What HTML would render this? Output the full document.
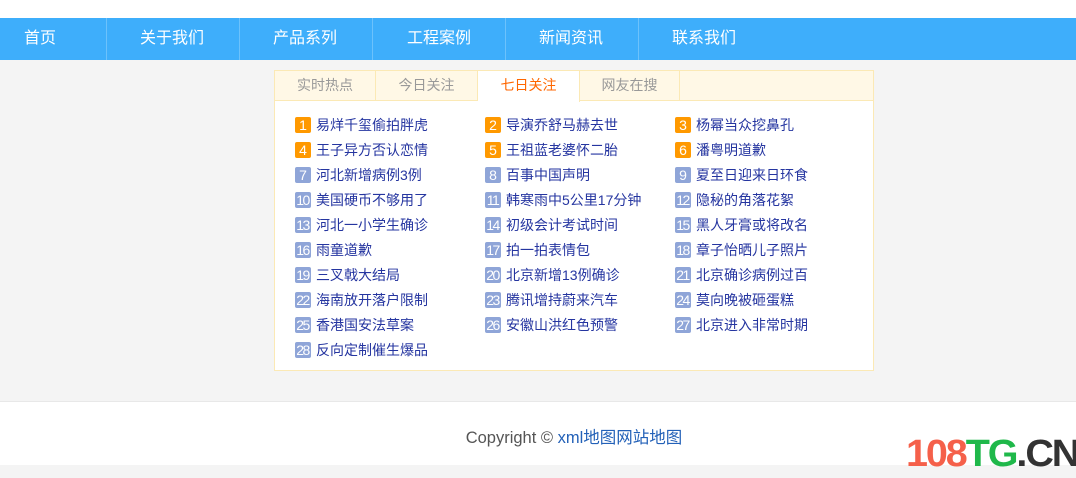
<!DOCTYPE html>
<html><head><meta charset="utf-8"><style>
*{margin:0;padding:0;box-sizing:border-box}
body{width:1076px;height:478px;background:#f4f4f4;font-family:"Liberation Sans","Noto Sans CJK SC",sans-serif;position:relative;overflow:hidden}
.top{position:absolute;left:0;top:0;width:1076px;height:18px;background:#fff}
.nav{position:absolute;left:0;top:18px;width:1076px;height:42px;background:#3eaefb}
.nav span{position:absolute;top:0;height:42px;line-height:42px;color:#fff;font-size:16px}
.sep{position:absolute;top:0;width:1px;height:42px;background:#6cc2fc}
.box{position:absolute;left:274px;top:70px;width:600px;height:301px;background:#fff;border:1px solid #fbe9b5}
.tabs{position:absolute;left:0;top:0;width:598px;height:30px;background:#fff8e6;border-bottom:1px solid #fbe9b5}
.tab{position:absolute;top:0;height:30px;line-height:29px;text-align:center;font-size:14px;color:#999;border-right:1px solid #fbe9b5}
.tab.on{background:#fff;color:#f60;height:31px}
.it{position:absolute;font-size:14px;color:#2535a0;height:16px;line-height:16px;white-space:nowrap}
.it b{display:inline-block;width:16px;height:16px;border-radius:2px;background:#8fa5d8;color:#fff;font-weight:normal;text-align:center;font-size:14px;margin-right:5px;vertical-align:top;line-height:16px}
.it b.o{background:#f90}
.it b.s{font-size:14px;letter-spacing:-1.5px;text-indent:-1px}
.foot{position:absolute;left:0;top:401px;width:1076px;height:64px;background:#fff;border-top:1px solid #e8e8e8}
.copy{position:absolute;left:0;width:1148px;top:22px;text-align:center;font-size:16.5px;color:#555}
.copy a{color:#2361b8;text-decoration:none}
.logo{position:absolute;left:906px;top:434px;font-size:38px;font-weight:bold;letter-spacing:-2px;font-family:"Liberation Sans",sans-serif;line-height:40px;transform:scaleX(1.04);transform-origin:left}
</style></head><body>
<div class="top"></div>
<div class="nav">
<span style="left:24px">首页</span>
<div class="sep" style="left:106px"></div>
<span style="left:140px">关于我们</span>
<div class="sep" style="left:239px"></div>
<span style="left:273px">产品系列</span>
<div class="sep" style="left:372px"></div>
<span style="left:407px">工程案例</span>
<div class="sep" style="left:505px"></div>
<span style="left:539px">新闻资讯</span>
<div class="sep" style="left:638px"></div>
<span style="left:672px">联系我们</span>
</div>
<div class="box">
<div class="tabs">
<div class="tab" style="left:0;width:101px">实时热点</div>
<div class="tab" style="left:101px;width:102px">今日关注</div>
<div class="tab on" style="left:203px;width:102px">七日关注</div>
<div class="tab" style="left:305px;width:100px">网友在搜</div>
</div>
<div class="it" style="left:20px;top:46px"><b class="o">1</b>易烊千玺偷拍胖虎</div>
<div class="it" style="left:210px;top:46px"><b class="o">2</b>导演乔舒马赫去世</div>
<div class="it" style="left:400px;top:46px"><b class="o">3</b>杨幂当众挖鼻孔</div>
<div class="it" style="left:20px;top:71px"><b class="o">4</b>王子异方否认恋情</div>
<div class="it" style="left:210px;top:71px"><b class="o">5</b>王祖蓝老婆怀二胎</div>
<div class="it" style="left:400px;top:71px"><b class="o">6</b>潘粤明道歉</div>
<div class="it" style="left:20px;top:96px"><b>7</b>河北新增病例3例</div>
<div class="it" style="left:210px;top:96px"><b>8</b>百事中国声明</div>
<div class="it" style="left:400px;top:96px"><b>9</b>夏至日迎来日环食</div>
<div class="it" style="left:20px;top:121px"><b class="s">10</b>美国硬币不够用了</div>
<div class="it" style="left:210px;top:121px"><b class="s">11</b>韩寒雨中5公里17分钟</div>
<div class="it" style="left:400px;top:121px"><b class="s">12</b>隐秘的角落花絮</div>
<div class="it" style="left:20px;top:146px"><b class="s">13</b>河北一小学生确诊</div>
<div class="it" style="left:210px;top:146px"><b class="s">14</b>初级会计考试时间</div>
<div class="it" style="left:400px;top:146px"><b class="s">15</b>黑人牙膏或将改名</div>
<div class="it" style="left:20px;top:171px"><b class="s">16</b>雨童道歉</div>
<div class="it" style="left:210px;top:171px"><b class="s">17</b>拍一拍表情包</div>
<div class="it" style="left:400px;top:171px"><b class="s">18</b>章子怡晒儿子照片</div>
<div class="it" style="left:20px;top:196px"><b class="s">19</b>三叉戟大结局</div>
<div class="it" style="left:210px;top:196px"><b class="s">20</b>北京新增13例确诊</div>
<div class="it" style="left:400px;top:196px"><b class="s">21</b>北京确诊病例过百</div>
<div class="it" style="left:20px;top:221px"><b class="s">22</b>海南放开落户限制</div>
<div class="it" style="left:210px;top:221px"><b class="s">23</b>腾讯增持蔚来汽车</div>
<div class="it" style="left:400px;top:221px"><b class="s">24</b>莫向晚被砸蛋糕</div>
<div class="it" style="left:20px;top:246px"><b class="s">25</b>香港国安法草案</div>
<div class="it" style="left:210px;top:246px"><b class="s">26</b>安徽山洪红色预警</div>
<div class="it" style="left:400px;top:246px"><b class="s">27</b>北京进入非常时期</div>
<div class="it" style="left:20px;top:271px"><b class="s">28</b>反向定制催生爆品</div>
</div>
<div class="foot"><div class="copy">Copyright © <a>xml地图网站地图</a></div></div>
<div class="logo"><span style="color:#f5604a">108</span><span style="color:#1fb84a">TG</span><span style="color:#333">.CN</span></div>
</body></html>
